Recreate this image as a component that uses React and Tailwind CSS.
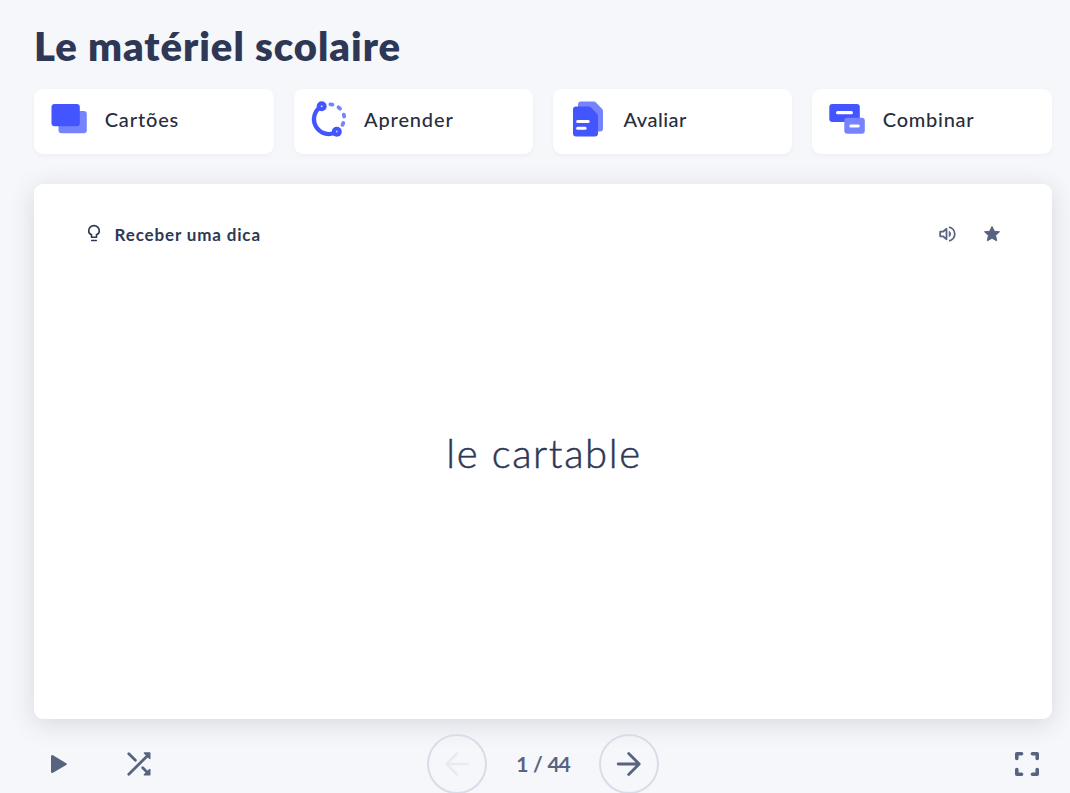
import React from "react";

const CardsIcon = () => (
  <svg className="h-10 w-10" viewBox="0 0 40 40">
    <rect x="9.5" y="12" width="28.3" height="22.3" rx="3" fill="#7583ff" />
    <rect x="2.5" y="5" width="28.3" height="22.3" rx="3" fill="#4255ff" />
  </svg>
);

const LearnIcon = () => (
  <svg className="h-10 w-10" viewBox="0 0 40 40" fill="none" strokeLinecap="round">
    <path d="M12.7 7.1A14.88 14.88 0 0 0 27 33.2" stroke="#4255ff" strokeWidth="4.3" />
    <path
      d="M21.400 5.300l2.100.3M29.500 8.300l1.500 1.400M34.800 15.600l.4 1.900M34.300 23.900l-.8 2"
      stroke="#7583ff"
      strokeWidth="3.8"
    />
    <g fill="#4255ff">
      <circle cx="12.7" cy="7.3" r="5" />
      <circle cx="27.8" cy="32.8" r="5" />
    </g>
    <g fill="#c5cbff">
      <circle cx="12.7" cy="7.3" r="1" />
      <circle cx="27.8" cy="32.6" r="1" />
    </g>
  </svg>
);

const TestIcon = () => (
  <svg className="h-10 w-10" viewBox="0 0 40 40">
    <path d="M13 2.5h12.8a3 3 0 0 1 2.2 1l6.2 6.6a3 3 0 0 1 .8 2v17.400a3 3 0 0 1-3 3H10V5.500a3 3 0 0 1 3-3z" fill="#7583ff" />
    <path d="M8 7.500h12.800a3 3 0 0 1 2.200 1l6.200 6.600a3 3 0 0 1 .8 2v17.400a3 3 0 0 1-3 3H8a3 3 0 0 1-3-3v-24a3 3 0 0 1 3-3z" fill="#4255ff" />
    <path d="M9.600 22.600h10.600M9.600 29.200h7.600" stroke="#fff" strokeWidth="3" strokeLinecap="round" />
  </svg>
);

const MatchIcon = () => (
  <svg className="h-10 w-10" viewBox="0 0 40 40">
    <rect x="2.300" y="5" width="30.500" height="18" rx="3" fill="#4255ff" />
    <rect x="17.300" y="18.700" width="20.500" height="16" rx="3" fill="#7583ff" />
    <path d="M10.600 13.700h13.800M23.900 27h7.300" stroke="#fff" strokeWidth="3.200" strokeLinecap="round" />
  </svg>
);

const modes = [
  { label: "Cartões", Icon: CardsIcon, spacing: "tracking-[0.85px]" },
  { label: "Aprender", Icon: LearnIcon, spacing: "tracking-[0.85px]" },
  { label: "Avaliar", Icon: TestIcon, spacing: "tracking-[0.5px]" },
  { label: "Combinar", Icon: MatchIcon, spacing: "tracking-[0.75px]" },
];

export default function App() {
  return (
    <main className="flex h-[793px] w-full flex-col overflow-hidden bg-[#f6f7fb] pl-[34px] pr-[18px] font-['Lato',sans-serif] text-[#2e3856]">
      <h1 className="mt-[22px] h-[48px] whitespace-nowrap text-[40px] leading-[48px] font-extrabold tracking-[0.96px]">
        Le matériel scolaire
      </h1>

      <nav className="mt-[19px] mr-[0.35px] ml-[0.2px] grid h-[65px] shrink-0 grid-cols-4 gap-5">
        {modes.map(({ label, Icon, spacing }) => (
          <button
            key={label}
            className="flex items-start rounded-[9px] bg-white pt-[10px] pl-[15px] text-left shadow-[0_2px_4px_rgba(40,46,62,0.04)]"
          >
            <Icon />
            <span className={`ml-[15.5px] mt-[8px] text-[20px] leading-6 font-medium text-[#282e3e] ${spacing}`}>
              {label}
            </span>
          </button>
        ))}
      </nav>

      <section className="mt-[30px] flex h-[535px] shrink-0 flex-col rounded-[9px] bg-white shadow-[0_5px_26px_rgba(40,46,62,0.15)]">
        <header className="flex h-[99px] items-center justify-between pr-[51px] pl-[50px]">
          <button className="flex items-center">
            <svg className="h-5 w-5" viewBox="0 0 20 20" fill="none" stroke="#2e3856" strokeWidth="1.600">
              <path d="M7.500 13.300v-2.500C5.700 9.900 4.700 8.500 4.700 6.900a5.300 5.300 0 0 1 10.600 0c0 1.600-1 3-2.800 3.900v2.500z" strokeLinejoin="round" />
              <path d="M7.700 16.500h4.600" strokeLinecap="round" />
            </svg>
            <span className="ml-[10.5px] mt-[3px] text-[17px] leading-6 font-bold tracking-[0.85px]">Receber uma dica</span>
          </button>
          <div className="mt-px flex items-center gap-[26px] text-[#586380]">
            <svg className="h-[18px] w-[18px]" viewBox="0 0 18 18" fill="none" stroke="currentColor" strokeWidth="1.800">
              <path d="M1.200 6.700v4.600h2.800l3.500 2.900V3.800L4 6.700z" strokeLinejoin="round" />
              <path d="M10.200 6.300a3.200 3.200 0 0 1 0 5.400z" fill="currentColor" strokeWidth=".8" strokeLinejoin="round" />
              <path d="M10 2.200a6.900 6.900 0 0 1 0 13.600" />
            </svg>
            <svg className="h-[18px] w-[18px]" viewBox="0 0 18 18" fill="currentColor">
              <path d="M9 1.500l2.300 4.700 5.200.6-3.900 3.600 1.100 5.400L9 13.200l-4.700 2.600 1.100-5.400L1.500 6.800l5.200-.6z" stroke="currentColor" strokeWidth="1" strokeLinejoin="round" />
            </svg>
          </div>
        </header>
        <p className="mt-[146px] pl-[2px] text-center text-[40px] leading-[48px] font-light tracking-[1.6px] [-webkit-text-stroke:0.5px_#2e3856]">le cartable</p>
      </section>

      <footer className="mt-[15px] grid h-[60px] shrink-0 grid-cols-[1fr_232px_1fr] items-center text-[#586380]">
        <div className="flex items-center">
          <svg className="ml-[15px] h-5 w-5" viewBox="0 0 20 20" fill="currentColor">
            <path d="M2 2.300a1.300 1.300 0 0 1 2-1.100l13.200 8a1 1 0 0 1 0 1.700L4 18.800a1.300 1.300 0 0 1-2-1.100z" />
          </svg>
          <svg className="ml-[56px] h-7 w-7" viewBox="0 0 28 28" fill="none" stroke="currentColor" strokeWidth="2.800" strokeLinecap="round">
            <path d="M3.800 24.200L23 5.200M3.800 3.800l6.600 6.500M17.700 17.700l5.800 5.800" />
            <path d="M19.400 3h5.400v5.400zM19.400 24.800h5.400v-5.400z" fill="currentColor" strokeWidth="1.400" strokeLinejoin="round" />
          </svg>
        </div>
        <div className="flex items-center justify-between">
          <button className="flex h-[60px] w-[60px] items-center justify-center rounded-full border-2 border-[#d9dde8] text-[#e9ebf1]">
            <svg className="h-7 w-7" viewBox="0 0 28 28" fill="none" stroke="currentColor" strokeWidth="2.600" strokeLinecap="round" strokeLinejoin="round">
              <path d="M14 3.500L3.500 14 14 24.500M3.500 14H24.500" />
            </svg>
          </button>
          <span className="text-[21px] leading-6 font-bold tracking-[-1px] [word-spacing:1.5px] whitespace-nowrap">1 / 44</span>
          <button className="flex h-[60px] w-[60px] items-center justify-center rounded-full border-2 border-[#d9dde8]">
            <svg className="h-7 w-7" viewBox="0 0 28 28" fill="none" stroke="currentColor" strokeWidth="2.800" strokeLinecap="round" strokeLinejoin="round">
              <path d="M13.700 3.500L24.200 14 13.700 24.500M24.200 14H3.200" />
            </svg>
          </button>
        </div>
        <div className="flex justify-end pr-[11px]">
          <svg className="h-7 w-7" viewBox="0 0 28 28" fill="none" stroke="currentColor" strokeWidth="3.600" strokeLinecap="round" strokeLinejoin="round">
            <path d="M3.800 8.500V3.800h4.800M19.400 3.800h4.800v4.700M24.200 19.500v4.700h-4.800M8.600 24.200H3.800v-4.700" />
          </svg>
        </div>
      </footer>
    </main>
  );
}
